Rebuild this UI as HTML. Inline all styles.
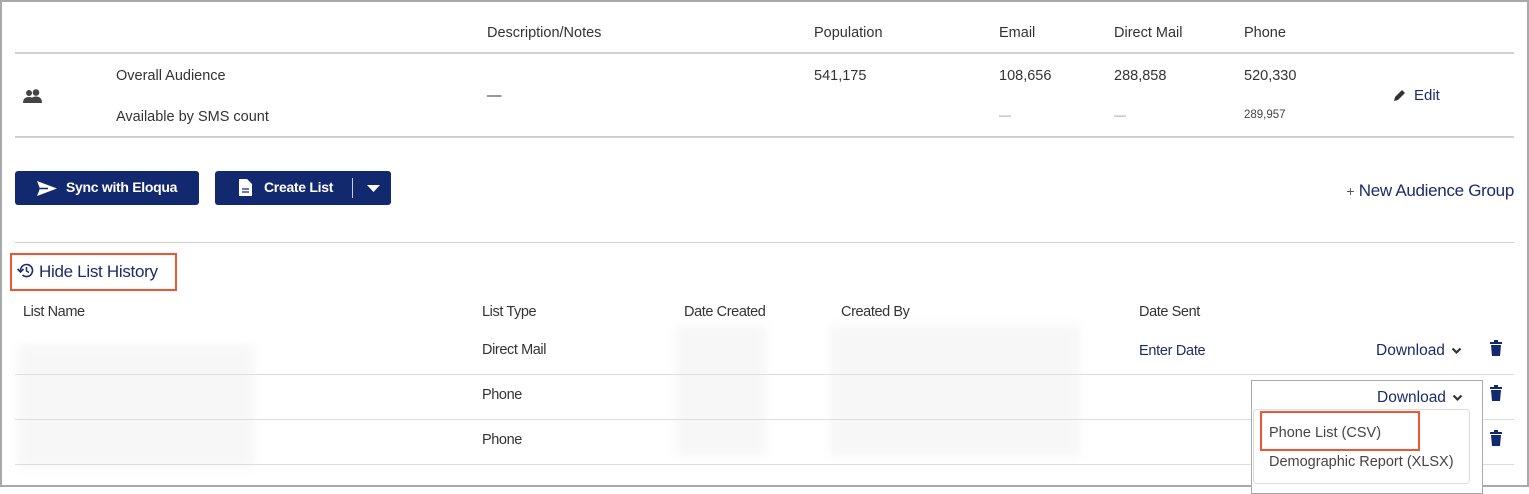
<!DOCTYPE html>
<html><head><style>
*{margin:0;padding:0;box-sizing:border-box}
body{width:1529px;height:494px;background:#fff;font-family:"Liberation Sans",sans-serif;position:relative;overflow:hidden;color:#333}
.a{position:absolute;white-space:nowrap}
.t{font-size:14.5px;color:#333}
.h{font-size:14.5px;color:#333}
.n{color:#1b2c6b}
.ln{position:absolute;height:2px;background:#d0d0d0}
.btn{position:absolute;background:#13296f;border-radius:3px;color:#fff;font-size:14px;font-weight:bold;letter-spacing:-0.3px}
.blur{position:absolute;background:#f7f7f7;filter:blur(5px)}
.chev{display:inline-block;vertical-align:middle;margin-left:6px}
</style></head><body>
<div class="a" style="left:0;top:0;width:1529px;height:487px;border:2px solid #a9a9a9"></div>

<div class="a h" style="left:487px;top:25px">Description/Notes</div>
<div class="a h" style="left:814px;top:25px">Population</div>
<div class="a h" style="left:999px;top:25px">Email</div>
<div class="a h" style="left:1114px;top:25px">Direct Mail</div>
<div class="a h" style="left:1244px;top:25px">Phone</div>
<div class="ln" style="left:15px;top:52px;width:1499px"></div>

<svg class="a" style="left:23px;top:89px" width="20" height="16" viewBox="0 0 20 16"><circle cx="6" cy="4" r="3" fill="#444"/><circle cx="13" cy="3.5" r="3.3" fill="#444"/><path d="M0 14c0-4 2-6 6-6s5 2 5 6z" fill="#444"/><path d="M7 14c0-4 2-6.5 6-6.5s6 2.5 6 6.5z" fill="#444"/></svg>
<div class="a t" style="left:116px;top:68px">Overall Audience</div>
<div class="a t" style="left:116px;top:109px">Available by SMS count</div>
<div class="a t" style="left:487px;top:88px">—</div>
<div class="a t" style="left:814px;top:68px">541,175</div>
<div class="a t" style="left:999px;top:68px">108,656</div>
<div class="a t" style="left:1114px;top:68px">288,858</div>
<div class="a t" style="left:1244px;top:68px">520,330</div>
<div class="a" style="left:999px;top:108px;font-size:12px;color:#999">—</div>
<div class="a" style="left:1114px;top:108px;font-size:12px;color:#999">—</div>
<div class="a" style="left:1244px;top:109px;font-size:11.5px;color:#444">289,957</div>
<svg class="a" style="left:1393px;top:89px" width="13" height="13" viewBox="0 0 13 13"><path d="M1 12l1-4 7-7 3 3-7 7z" fill="#333"/></svg>
<div class="a n" style="left:1414px;top:87px;font-size:15px">Edit</div>
<div class="ln" style="left:15px;top:136px;width:1499px"></div>

<div class="btn" style="left:15px;top:171px;width:184px;height:34px">
<svg class="a" style="left:22px;top:10px" width="20" height="15" viewBox="0 0 20 15"><path d="M0 0l20 7.5L0 15l3-7.5z" fill="#fff"/><path d="M3 7.5h8" stroke="#13296f" stroke-width="1.5"/></svg>
<span class="a" style="left:51px;top:8px">Sync with Eloqua</span></div>
<div class="btn" style="left:215px;top:171px;width:176px;height:34px">
<svg class="a" style="left:24px;top:8px" width="13" height="17" viewBox="0 0 13 17"><path d="M0 0h8l5 5v12H0z" fill="#fff"/><path d="M3 10h7M3 13h7" stroke="#13296f" stroke-width="1.3"/></svg>
<span class="a" style="left:49px;top:8px">Create List</span>
<div class="a" style="left:137px;top:7px;width:1px;height:20px;background:#ccc"></div>
<svg class="a" style="left:152px;top:14px" width="13" height="7" viewBox="0 0 13 7"><path d="M0 0h13L6.5 7z" fill="#fff"/></svg></div>
<div class="a n" style="right:15px;top:181px;font-size:17px;letter-spacing:-0.3px"><span style="color:#555;font-size:14px">+</span> New Audience Group</div>
<div class="ln" style="left:15px;top:242px;width:1499px;height:1px"></div>

<div class="a" style="left:10px;top:253px;width:167px;height:38px;border:2px solid #f05533"></div>
<svg class="a" style="left:17px;top:263px" width="17" height="15" viewBox="0 0 17 15"><path d="M3.5 7.5A6 6 0 1 1 5.5 12" fill="none" stroke="#1b2c6b" stroke-width="1.6"/><path d="M0.5 6l3 3 3-3" fill="none" stroke="#1b2c6b" stroke-width="1.6"/><path d="M9.5 4v4l2.5 1.5" fill="none" stroke="#1b2c6b" stroke-width="1.5"/></svg>
<div class="a n" style="left:39px;top:262px;font-size:17px;letter-spacing:-0.3px">Hide List History</div>

<div class="a h" style="left:23px;top:304px;letter-spacing:-0.4px">List Name</div>
<div class="a h" style="left:482px;top:304px;letter-spacing:-0.4px">List Type</div>
<div class="a h" style="left:684px;top:304px;letter-spacing:-0.4px">Date Created</div>
<div class="a h" style="left:841px;top:304px;letter-spacing:-0.4px">Created By</div>
<div class="a h" style="left:1139px;top:304px;letter-spacing:-0.4px">Date Sent</div>

<div class="blur" style="left:18px;top:345px;width:236px;height:122px"></div>
<div class="blur" style="left:676px;top:325px;width:90px;height:132px"></div>
<div class="blur" style="left:830px;top:325px;width:250px;height:132px"></div>

<div class="ln" style="left:15px;top:374px;width:1499px;height:1px;background:#ddd"></div>
<div class="ln" style="left:15px;top:419px;width:1499px;height:1px;background:#ddd"></div>
<div class="ln" style="left:15px;top:464px;width:1499px;height:1px;background:#ddd"></div>

<div class="a t" style="left:482px;top:342px;letter-spacing:-0.4px">Direct Mail</div>
<div class="a t" style="left:482px;top:387px;letter-spacing:-0.4px">Phone</div>
<div class="a t" style="left:482px;top:432px;letter-spacing:-0.4px">Phone</div>
<div class="a n" style="left:1139px;top:343px;font-size:14.5px;letter-spacing:-0.3px">Enter Date</div>
<div class="a n" style="left:1376px;top:342px;font-size:15.5px">Download<svg class="chev" width="11" height="8" viewBox="0 0 11 8"><path d="M1.5 1.5l4 4 4-4" fill="none" stroke="#333" stroke-width="2.2"/></svg></div>
<svg class="a" style="left:1490px;top:340px" width="12" height="16" viewBox="0 0 12 16"><path d="M0 2h12v2H0zM4 0h4v2H4zM1 5h10l-1 11H2z" fill="#13296f"/></svg>
<svg class="a" style="left:1490px;top:385px" width="12" height="16" viewBox="0 0 12 16"><path d="M0 2h12v2H0zM4 0h4v2H4zM1 5h10l-1 11H2z" fill="#13296f"/></svg>
<svg class="a" style="left:1490px;top:430px" width="12" height="16" viewBox="0 0 12 16"><path d="M0 2h12v2H0zM4 0h4v2H4zM1 5h10l-1 11H2z" fill="#13296f"/></svg>

<div class="a" style="left:1251px;top:380px;width:232px;height:114px;border:1px solid #aaa;background:#fff"></div>
<div class="a n" style="left:1377px;top:389px;font-size:15.5px">Download<svg class="chev" width="11" height="8" viewBox="0 0 11 8"><path d="M1.5 1.5l4 4 4-4" fill="none" stroke="#333" stroke-width="2.2"/></svg></div>
<div class="a" style="left:1253px;top:409px;width:217px;height:75px;border:1px solid #ddd;border-radius:4px;background:#fff"></div>
<div class="a" style="left:1260px;top:411px;width:160px;height:40px;border:2px solid #f05533"></div>
<div class="a t" style="left:1269px;top:425px;color:#444">Phone List (CSV)</div>
<div class="a t" style="left:1269px;top:454px;color:#444">Demographic Report (XLSX)</div>
</body></html>
